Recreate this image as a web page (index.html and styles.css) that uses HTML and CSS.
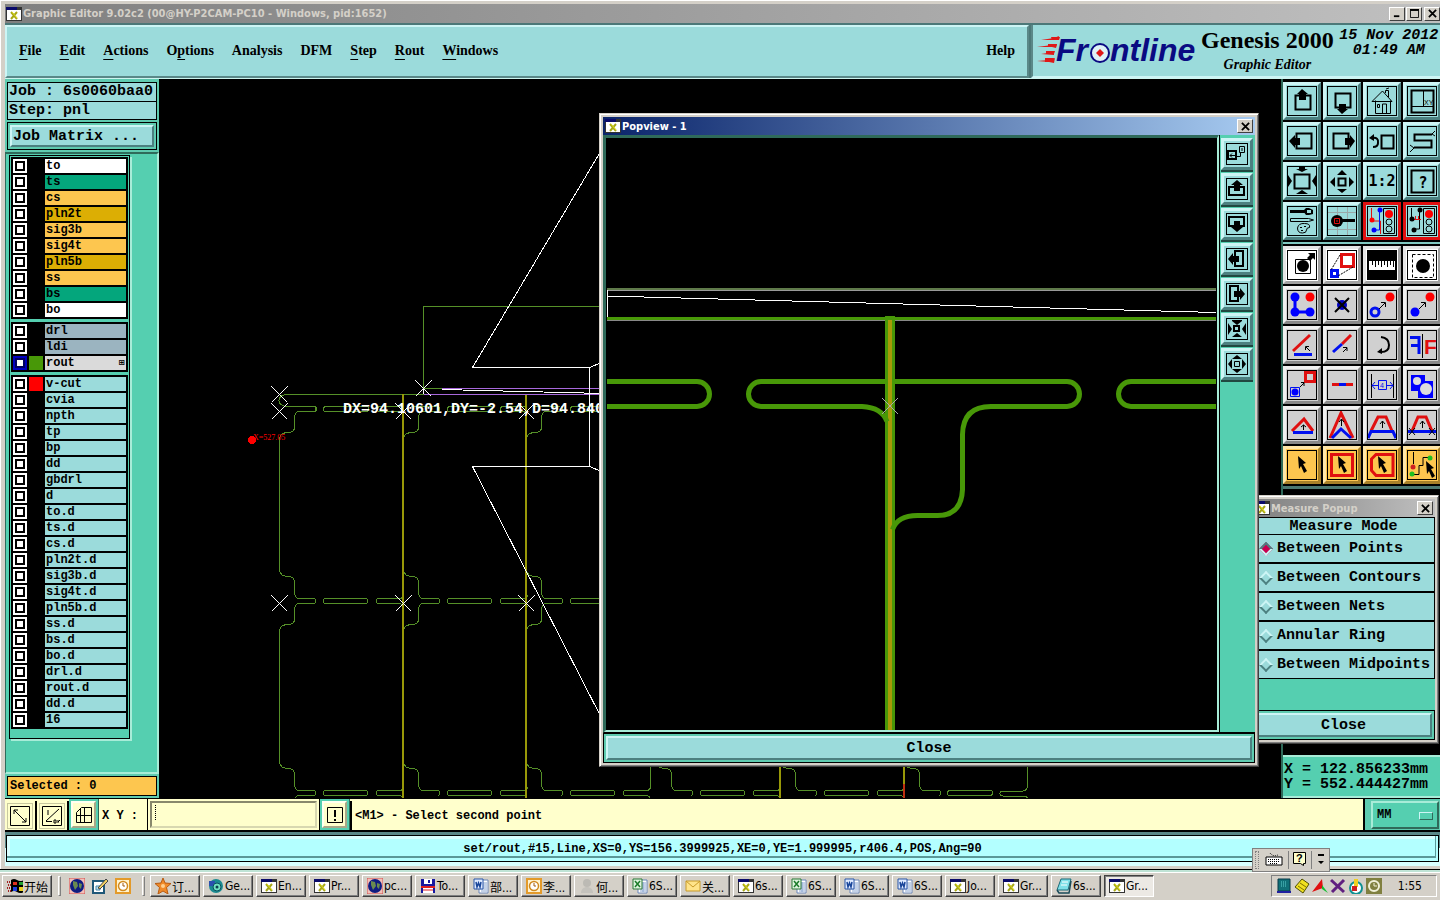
FILE: index.html
```
<!DOCTYPE html>
<html lang="en">
  <head>
    <meta charset="UTF-8" />
    <meta name="viewport" content="width=device-width, initial-scale=1.0" />
    <title>Graphic Editor</title>
    <link rel="stylesheet" href="styles.css" />
  </head>
  <body>
    <!-- shared shapes -->
    <svg class="defs" width="0" height="0">
      <symbol id="xwin" viewBox="0 0 16 16">
        <rect x="0" y="1" width="16" height="14" fill="#333" />
        <rect x="1" y="4" width="14" height="10" fill="#fff" />
        <rect x="0" y="1" width="11" height="3" fill="#0a0a6a" />
        <path d="M5 6l6 7M11 6l-6 7" stroke="#a8a818" stroke-width="2" />
        <path d="M6 6l5 6" stroke="#e4e020" />
      </symbol>
      <symbol id="closeX" viewBox="0 0 10 10">
        <path d="M1 1l8 8M9 1l-8 8" stroke="#000" stroke-width="2" />
      </symbol>
      <symbol id="cursor" viewBox="0 0 10 17">
        <path d="M0 0l8 7-3 1 4 7-3 2-3-7-2 3z" fill="#000" />
      </symbol>
      <symbol id="globe" viewBox="0 0 16 16">
        <rect width="16" height="16" fill="#f3c0b8" />
        <path d="M0 0h16v16H0z" fill="none" stroke="#d05050" />
        <circle cx="8" cy="8" r="7" fill="#101c80" />
        <path d="M4 3l4 1 1 4-3 4-2-5zM10 5l3 1-1 5-2-2z" fill="#6a8a50" />
      </symbol>
      <symbol id="clock" viewBox="0 0 16 16">
        <rect x="1" y="1" width="14" height="14" fill="#fff3cf" stroke="#e39a2a" stroke-width="2" />
        <circle cx="8" cy="8" r="4.500" fill="#fff" stroke="#d08a20" stroke-width="1.500" />
        <path d="M8 5v3h2" fill="none" stroke="#a05a10" />
      </symbol>
      <symbol id="star" viewBox="0 0 16 16">
        <path d="M8 0l2 5 6 .5-4.500 4L13 16l-5-3-5 3 1.500-6.500L0 5.500 6 5z" fill="#f08a28" stroke="#b85a10" />
        <circle cx="8" cy="8" r="2" fill="#ffd090" />
      </symbol>
      <symbol id="genesis" viewBox="0 0 16 16">
        <circle cx="8" cy="8" r="7" fill="#1a8a90" />
        <path d="M1 3h6v5H1z" fill="#2a50b0" />
        <circle cx="9" cy="9" r="4" fill="#70e0c0" stroke="#0a5060" />
        <circle cx="9" cy="9" r="1.500" fill="#0a4050" />
      </symbol>
      <symbol id="disk" viewBox="0 0 16 16">
        <path d="M1 1h14v14H1z" fill="#1818a0" />
        <path d="M4 1h8v5H4z" fill="#fff" />
        <path d="M8 2h2v3H8z" fill="#1818a0" />
        <path d="M1 8h14v2H1z" fill="#e02020" />
        <path d="M3 10h10v5H3z" fill="#fff" />
        <path d="M3 12h10" stroke="#e02020" />
      </symbol>
      <symbol id="word" viewBox="0 0 16 16">
        <path d="M6 2h9v13H6z" fill="#fff" stroke="#6a86b8" />
        <path d="M8 5h6M8 7h6M8 9h6M8 11h6M8 13h6" stroke="#88a4d0" />
        <path d="M1 1h9v10H1z" fill="#dfeaff" stroke="#2a56a8" />
        <path d="M3 4l1 5 1.500-4L7 9l1-5" fill="none" stroke="#1a469a" stroke-width="1.500" />
      </symbol>
      <symbol id="excel" viewBox="0 0 16 16">
        <path d="M6 2h9v13H6z" fill="#fff" stroke="#6a86b8" />
        <path d="M8 5h6M8 7h6M8 9h6M8 11h6M8 13h6M11 4v10" stroke="#88a4d0" />
        <path d="M1 1h9v10H1z" fill="#dff4df" stroke="#2a7a38" />
        <path d="M3 3l5 6M8 3L3 9" stroke="#1a7a28" stroke-width="1.500" />
      </symbol>
      <symbol id="mail" viewBox="0 0 16 16">
        <path d="M1 3h14v10H1z" fill="#ffe48a" stroke="#c89a28" />
        <path d="M1 3l7 6 7-6" fill="none" stroke="#c89a28" />
      </symbol>
      <symbol id="person" viewBox="0 0 16 16">
        <circle cx="8" cy="5" r="4" fill="#bcbab4" />
        <path d="M2 15c0-8 12-8 12 0z" fill="#c4c2bc" />
      </symbol>
      <symbol id="note" viewBox="0 0 16 16">
        <path d="M5 1h10l-3 11H1z" fill="#7fe0e8" stroke="#1a6a78" />
        <path d="M1 12l2 3h10l2-12" fill="none" stroke="#1a4a58" stroke-width="1.500" />
        <path d="M6 4h6M5 7h6" stroke="#fff" />
      </symbol>
      <symbol id="pencil" viewBox="0 0 16 16">
        <path d="M1 3h11v12H1z" fill="#fff" stroke="#205878" stroke-width="2" />
        <path d="M4 8h4v4H4z" fill="#bfe0f0" stroke="#48a" />
        <path d="M6 10l8-9 2 2-8 8z" fill="#f0d060" stroke="#444" />
      </symbol>
      <!-- rout tabs and the slots that follow them to the right -->
      <g id="tabUp"><path d="M0-31q1 6 9 6 6 0 6 6v9q0 7 5 7h14a2.500 2.500 0 0 1 0 5" /></g>
      <g id="tabDown"><path d="M0 29q1-6 9-6 6 0 6-6V9q0-7 5-7h14a2.500 2.500 0 0 0 0-5" /></g>
      <g id="slots">
        <path d="M46-3h40a2.500 2.500 0 0 1 0 5H46a2.500 2.500 0 0 1 0-5" />
        <path d="M124-6q-1 3-4 3H99a2.500 2.500 0 0 0 0 5h21q3 0 4 4" />
      </g>
      <path id="mark" d="M-8-8L8 8M8-8L-8 8" />
    </svg>

    <div class="editor">
      <header class="titlebar">
        <svg class="win-icon"><use href="#xwin" /></svg>
        <h1>Graphic Editor 9.02c2 (00@HY-P2CAM-PC10 - Windows, pid:1652)</h1>
        <div class="win-buttons">
          <button aria-label="Minimize"><svg viewBox="0 0 10 10"><path d="M1 8h6" stroke="#000" stroke-width="2" /></svg></button>
          <button aria-label="Maximize"><svg viewBox="0 0 10 10"><path d="M.5 1.500h9v8h-9z" fill="none" stroke="#000" /><path d="M0 1h10" stroke="#000" stroke-width="2" /></svg></button>
          <button aria-label="Close" class="apart"><svg><use href="#closeX" /></svg></button>
        </div>
      </header>

      <div class="top">
        <nav class="menu">
          <button><u>F</u>ile</button>
          <button><u>E</u>dit</button>
          <button><u>A</u>ctions</button>
          <button>O<u>p</u>tions</button>
          <button>Analysis</button>
          <button>DFM</button>
          <button><u>S</u>tep</button>
          <button><u>R</u>out</button>
          <button><u>W</u>indows</button>
          <button class="help">Help</button>
        </nav>
        <div class="brand">
          <svg class="logo" width="164" height="50">
            <g fill="#e01818" transform="translate(0 10)">
              <path d="M4 5l13-2 5-2-1 4zM0 12l15-2 5-1-1 4-4-1zM4 19l13-2 0 3zM0 26l12-1 6-2-1 5-5-1z" />
              <path d="M14 2h9l-1 3h-7zM11 9h9l-1 3h-8zM9 16h9l-1 3H9zM8 23h9l-1 4H8z" />
            </g>
            <text x="19" y="36">Fr</text>
            <circle cx="63" cy="28" r="9" fill="#dff2f6" stroke="#0a0a82" stroke-width="2" />
            <path d="M63 24l4 4-4 4-4-4z" fill="#e01818" />
            <text x="73" y="36">ntline</text>
          </svg>
          <div class="product">
            <strong>Genesis 2000</strong>
            <em>Graphic Editor</em>
          </div>
          <div class="date">15 Nov 2012<br />01:49 AM</div>
        </div>
      </div>

      <main class="workspace">
        <aside class="side">
          <div class="job">
            <div>Job : 6s0060baa0</div>
            <div>Step: pnl</div>
          </div>
          <div class="matrix"><button>Job Matrix ...</button></div>
          <div class="layer-area">
            <div class="layers" id="layers"></div>
          </div>
          <div class="selected">Selected : 0</div>
        </aside>

        <svg class="canvas" shape-rendering="crispEdges">
          <g transform="translate(-159 -79)" fill="none">
            <g stroke="#559028">
              <path d="M423.500 388V306.500H610M424 388.500h18" />
              <path d="M610 394.500H286q-7 1-7 6t7 6h28a2.500 2.500 0 0 1 0 5" />
              <path d="M326 406.500h40a2.500 2.500 0 0 1 0 5h-40a2.500 2.500 0 0 1 0-5M403 406.500h-23a2.500 2.500 0 0 0 0 5h20q3 0 3 4" />
              <path d="M411 406.500h26M450 406.500h40a2.500 2.500 0 0 1 0 5h-40a2.500 2.500 0 0 1 0-5M526 406.500h-23a2.500 2.500 0 0 0 0 5h20q3 0 3 4" />
              <path d="M534 406.500h26M573 411.500h40M573 406.500h40M573 406.500a2.500 2.500 0 0 0 0 5" />
              <use href="#tabDown" x="279.500" y="409.500" />
              <use href="#tabDown" x="403.500" y="409.500" />
              <use href="#tabDown" x="526.500" y="409.500" />
              <path d="M279.500 438v133M279.500 630v134" />
              <use href="#tabUp" x="279.500" y="601.500" />
              <use href="#tabDown" x="279.500" y="601.500" />
              <use href="#slots" x="279.500" y="601.500" />
              <use href="#tabUp" x="403.500" y="601.500" />
              <use href="#tabDown" x="403.500" y="601.500" />
              <use href="#slots" x="403.500" y="601.500" />
              <use href="#tabUp" x="526.500" y="601.500" />
              <use href="#tabDown" x="526.500" y="601.500" />
              <use href="#slots" x="526.500" y="601.500" />
              <use href="#tabUp" x="279.500" y="793.500" />
              <use href="#tabDown" x="279.500" y="793.500" />
              <use href="#slots" x="279.500" y="793.500" />
              <use href="#tabUp" x="403.500" y="793.500" />
              <use href="#slots" x="403.500" y="793.500" />
              <use href="#tabUp" x="526.500" y="793.500" />
              <use href="#slots" x="526.500" y="793.500" />
              <use href="#tabUp" x="656.500" y="793.500" />
              <use href="#slots" x="656.500" y="793.500" />
              <use href="#tabUp" x="780.500" y="793.500" />
              <use href="#slots" x="780.500" y="793.500" />
              <use href="#tabUp" x="904.500" y="793.500" />
              <path d="M950 790.500h40a2.500 2.500 0 0 1 0 5h-40a2.500 2.500 0 0 1 0-5" />
              <path d="M1027.500 760v25q0 6-5 6h-20a2.500 2.500 0 0 0 0 5h20q4 0 5 2M650.500 760v25q0 6-5 6" />
            </g>
            <path d="M403 394v404M526 394v404M780 760v38M904 760v30" stroke="#989808" stroke-width="2" />
            <path d="M904 784v14" stroke="#c03010" stroke-width="2" />
            <path d="M442 388.500h160M424 394.500h180" stroke="#a868dc" />
            <path d="M442 389.500L604 393.500M423.500 388v6" stroke="#fff" />
            <path d="M602 149L472.500 367.500h117v99h-117L602 719M589.500 367.500l12-5M589.500 466.500l12 5" stroke="#fff" />
            <g stroke="#fff">
              <use href="#mark" x="423.500" y="388.500" />
              <use href="#mark" x="279.500" y="394.500" />
              <use href="#mark" x="279.500" y="411.500" />
              <use href="#mark" x="403.500" y="411.500" />
              <use href="#mark" x="526.500" y="411.500" />
              <use href="#mark" x="279.500" y="603.500" />
              <use href="#mark" x="403.500" y="603.500" />
              <use href="#mark" x="526.500" y="603.500" />
            </g>
            <circle cx="252" cy="440" r="4" fill="#f00" />
            <text x="253" y="440" class="origin-text">X=527.05</text>
            <text x="343" y="413" class="measure-text">DX=94.10601,DY=-2.54,D=94.8400</text>
          </g>
        </svg>

        <aside class="tools">
          <div class="tool-grid view">
            <button aria-label="Pan up"><svg><path d="M8.500 9.500h15v14h-15z" /><path class="f" d="M15 3l6 5h-2v6h-7V8h-2z" /></svg></button>
            <button aria-label="Pan down"><svg><path d="M8.500 7.500h15v14h-15z" /><path class="f" d="M15 28l6-5h-2v-5h-7v5h-2z" /></svg></button>
            <button aria-label="Home"><svg class="thin"><path d="M8.500 14.500v13h15v-13M5 15.500L15.500 5l9.500 10.500zM18.500 7V4.500h3V11M19 3l3-1M15.500 27v-9h4v9M10.500 18.500h2v3h-2z" /></svg></button>
            <button aria-label="Pan to XY"><svg><path d="M4.500 4.500h22v22h-22z" /><path class="t" d="M16.500 4v16M4 20.500h22" /><text x="17" y="19" class="tiny">XY</text></svg></button>
            <button aria-label="Pan left"><svg><path d="M9.500 7.500h15v15h-15z" /><path class="f" d="M2 15l6-6v3h5v7H8v3z" /></svg></button>
            <button aria-label="Pan right"><svg><path d="M6.500 7.500h15v15h-15z" /><path class="f" d="M28 15l-5-6v3h-5v7h5v3z" /></svg></button>
            <button aria-label="Previous view"><svg><path d="M14.500 9.500h12v13h-12zM5 12q7-1 6 5 0 4-5 4" /><path class="f" d="M2 12l5-4v7z" /></svg></button>
            <button aria-label="Serpentine"><svg><path d="M25 8.500H7.500v6h17v7H7" /><path class="t" d="M25 8l3-3M25 8l3 2M7 22l-4-3M7 22l-4 4" /></svg></button>
            <button aria-label="Zoom in"><svg><path d="M7.500 8.500h15v14h-15z" /><path class="f" d="M15 6l-6-3h3V1h6v2h3zM15 24l-6 4h12zM5 15l-4-6v12zM25 15l4-6v12z" /></svg></button>
            <button aria-label="Zoom out"><svg><path d="M11.500 12.500h7v7h-7z" /><path class="f" d="M15 4l5 5H10zM15 27l5-4H10zM3 16l5-5v10zM27 16l-5-5v10z" /></svg></button>
            <button aria-label="Zoom ratio"><svg><text x="15" y="20" class="ratio">1:2</text></svg></button>
            <button aria-label="Help"><svg><path d="M4.500 4.500h22v22h-22z" /><text x="16" y="22" class="ratio">?</text></svg></button>
            <button aria-label="Settings"><svg class="thin"><path class="f" d="M3 4h14v3H3zM16 5l3-3h3v2h-2v3h2v2h-3zM22 2l4 2v4l-4 1V7h2V4h-2z" /><path d="M3.500 12.500h18l5 1.500-5 1.500h-18z" /><path d="M10.500 22q1-5 7-4.500 6 0 5 4-3 0-3 2.500 0 3-4 3-5 0-5-5z" /><path d="M13 21.500h2M17 20.500h2M14 24.500h2" /></svg></button>
            <button aria-label="Snap"><svg class="thin"><path d="M10.500 0v30M20.500 0v30M0 6.500h30M0 23.500h30" style="stroke: #98a8a8" /><circle class="f" cx="10" cy="15" r="6" /><path class="f" d="M15 13h13v3H15z" /><path class="red" d="M7.500 12.500h5v5h-5zM10 14v2" /></svg></button>
            <button class="alert" aria-label="Net check"><svg class="thin"><path class="red" d="M4.500 2v13h9v13" /><path class="blue" d="M12.500 5v19H7" /><circle cx="13" cy="4" r="2.500" fill="#00f" /><circle cx="5" cy="14" r="2.500" fill="#f00" /><circle cx="7" cy="24" r="2.500" fill="#00f" /><path d="M16.500 2.500h11v25h-11z" /><circle cx="22" cy="8" r="4" fill="#f00" /><circle cx="22" cy="16" r="3" /><circle cx="22" cy="23" r="3" /></svg></button>
            <button class="alert" aria-label="Line check"><svg class="thin"><path d="M4.500 2v12M12.500 5v18H7" /><path class="red" d="M6 13.500h8M8.500 10v4M11.500 10v4" /><circle class="f" cx="13" cy="4" r="2.500" /><circle class="f" cx="5" cy="13" r="2.500" /><circle class="f" cx="7" cy="24" r="2.500" /><path d="M16.500 2.500h11v25h-11z" /><circle cx="22" cy="8" r="4" fill="#f00" /><circle cx="22" cy="16" r="3" /><circle cx="22" cy="23" r="3" /></svg></button>
          </div>
          <div class="tool-grid edit">
            <button class="white" aria-label="Feature"><svg class="thin"><path d="M8.500 9.500h15v14h-15z" /><circle class="f" cx="16" cy="16" r="6" /><path class="f" d="M20 8l3-3-2-2h7v7l-2-2-3 3z" /></svg></button>
            <button class="white" aria-label="Resize"><svg><path class="red" d="M14.500 4.500h12v12h-12z" /><path class="blue" d="M4.500 20.500h6v6h-6z" /><path class="t" d="M13 5L4 20M26 17L11 26" stroke-dasharray="2 1" /></svg></button>
            <button class="white" aria-label="Measure"><svg class="thin"><path class="f" d="M1 1h28v28H1z" /><path d="M2 11h26v9H2z" fill="#fff" style="stroke: none" /><path d="M5.500 11v4M8.500 11v6M11.500 11v4M14.500 11v6M17.500 11v4M20.500 11v6M23.500 11v4M26.500 11v6" /></svg></button>
            <button class="white" aria-label="Select area"><svg class="thin"><path d="M5.500 4.500h21v23h-21z" stroke-dasharray="3 2" /><circle class="f" cx="16" cy="16" r="7" /></svg></button>
            <button aria-label="Chain"><svg><path d="M8 7v15h15" style="stroke: #00f; stroke-width: 3" /><circle cx="8" cy="7" r="4.500" fill="#00f" /><circle cx="8" cy="22" r="4.500" fill="#00f" /><circle cx="23" cy="22" r="4.500" fill="#00f" /><circle cx="23" cy="7" r="4.500" fill="#f00" /></svg></button>
            <button aria-label="Delete"><svg><circle cx="15" cy="15" r="5" fill="#0000c0" /><path d="M8 8l14 14M22 8L8 22" /></svg></button>
            <button aria-label="Move"><svg><circle class="blue" cx="8" cy="22" r="4" /><circle cx="23" cy="7" r="4.500" fill="#f00" /><path class="t" d="M12 19l6-6M14 12.500h4.500V17" /></svg></button>
            <button aria-label="Copy"><svg><circle cx="8" cy="22" r="4.500" fill="#00f" /><circle cx="23" cy="7" r="4.500" fill="#f00" /><path class="t" d="M12 19l6-6M14 12.500h4.500V17" /></svg></button>
            <button aria-label="Rotate line"><svg><path class="red" d="M6 21L23 5" /><path class="blue" d="M7 24.500h18" /><path class="t" d="M23 21l-4-4M18.500 20v-3.500H22" /></svg></button>
            <button aria-label="Extend line"><svg><path class="red" d="M15 14l9-9" /><path class="blue" d="M6 22l9-8" /><path class="t" d="M16 22l4-4M16 17.500h4V21" /></svg></button>
            <button aria-label="Rotate"><svg><path d="M14 7q8 1 8 8t-8 7" /><path class="f" d="M10 22l5-4v6z" /></svg></button>
            <button aria-label="Mirror"><svg><path class="blue" d="M3 7.500h9V24M4 15.500h8" /><path class="t" d="M15.500 4v24" /><text x="17" y="24" class="flip">F</text></svg></button>
            <button aria-label="Scale"><svg><path class="blue t" d="M3.500 17.500h9v9h-9z" /><circle cx="8" cy="22" r="3.500" fill="#00f" /><path class="red" d="M18.500 2.500h9v9h-9z" /><path class="red t" d="M19 5l2-2M27 9l-2 2" /><path class="t" d="M13 17l4-4M14 12.500h3V16" /></svg></button>
            <button aria-label="Break line"><svg><path class="red" d="M5 14.500h21" /><path class="blue" d="M12 14.500h7" /></svg></button>
            <button aria-label="Spacing"><svg class="thin"><path d="M4.500 4v24M26.500 4v24" /><path class="blue" d="M11.500 10.500h8v9h-8zM5 15.500h6M8 12l-3 3.500L8 19M20 15.500h6M23 12l3 3.500-3 3.500" /><text x="13" y="18" class="tiny bluetext">4</text></svg></button>
            <button aria-label="Merge"><svg><path d="M4 5h14v6h8v17H11v-7H4z" fill="#00f" style="stroke: none" /><circle cx="10" cy="11" r="4" fill="#ddd" style="stroke: none" /><circle cx="19" cy="19" r="6" fill="#ddd" style="stroke: none" /></svg></button>
            <button aria-label="Triangle"><svg><path class="red" d="M5 21L17 9l9 12" /><path class="blue" d="M6 22.500h20" /><path class="t" d="M16.500 20v-5M14 17l2.500-2 2.500 2" /></svg></button>
            <button aria-label="Corner"><svg><path class="red" d="M3 28L14 3l12 25" /><path class="blue" d="M5 28l9-9 10 9" /><path class="t" d="M14.500 16V9M12 12l2.500-3 2.500 3" /></svg></button>
            <button aria-label="Chamfer"><svg><path class="red" d="M4 21l7-14h8l6 14" /><path class="blue" d="M1 28l3-6.500h22l3 6.500" /><path class="t" d="M15.500 18v-7M13 14l2.500-3 2.500 3" /></svg></button>
            <button aria-label="Flat"><svg><path class="red" d="M5 21l6-14h8l6 14" /><path class="blue" d="M1 21.500h28" /><path class="t" d="M15.500 18v-7M13 14l2.500-3 2.500 3M2 18l6 7M8 18l-6 7M22 18l6 7M28 18l-6 7" /></svg></button>
            <button class="orange" aria-label="Select"><svg><use href="#cursor" x="11" y="6" width="10" height="17" /></svg></button>
            <button class="orange" aria-label="Select frame"><svg><path class="red" d="M4.500 4.500h21v21h-21z" /><use href="#cursor" x="11" y="6" width="10" height="17" /></svg></button>
            <button class="orange" aria-label="Select polygon"><svg><path class="red" d="M9 4.500h17v21H9l-4.500-5V9z" /><use href="#cursor" x="11" y="6" width="10" height="17" /></svg></button>
            <button class="orange" aria-label="Select net"><svg class="thin"><path d="M6.500 2v12M6 24.500h6v-9h4v-8h6" /><circle cx="6" cy="17" r="2.500" fill="#d02020" /><circle cx="23" cy="8" r="2.500" fill="#20c020" /><circle cx="5" cy="24" r="2.500" fill="#20c020" /><use href="#cursor" x="19" y="11" width="10" height="17" /></svg></button>
          </div>
          <div class="coords">X = 122.856233mm<br />Y = 552.444427mm</div>
        </aside>

        <section class="window measure">
          <header class="titlebar">
            <svg class="win-icon"><use href="#xwin" /></svg>
            <h2>Measure Popup</h2>
            <div class="win-buttons"><button aria-label="Close"><svg><use href="#closeX" /></svg></button></div>
          </header>
          <div class="measure-body">
            <h3>Measure Mode</h3>
            <label><input type="radio" name="mode" checked />Between Points</label>
            <label><input type="radio" name="mode" />Between Contours</label>
            <label><input type="radio" name="mode" />Between Nets</label>
            <label><input type="radio" name="mode" />Annular Ring</label>
            <label><input type="radio" name="mode" />Between Midpoints</label>
            <div class="close-row"><button>Close</button></div>
          </div>
        </section>

        <section class="window popview">
          <header class="titlebar">
            <svg class="win-icon"><use href="#xwin" /></svg>
            <h2>Popview - 1</h2>
            <div class="win-buttons"><button aria-label="Close"><svg><use href="#closeX" /></svg></button></div>
          </header>
          <div class="pop-body">
            <svg class="pop-canvas">
              <g transform="translate(-606 -138)" fill="none">
                <path d="M607 289h609" stroke="#5f7a4a" stroke-width="2" />
                <path d="M607 290.500h609" stroke="#999" />
                <path d="M607.500 290v28M607 296L1216 312.500" stroke="#fff" shape-rendering="crispEdges" />
                <path d="M607 318.500h609" stroke="#489808" stroke-width="3" />
                <path d="M607 320.500h609" stroke="#888" />
                <path d="M890 316v420" stroke="#489808" stroke-width="10" />
                <path d="M890 320v416" stroke="#a89a08" stroke-width="4" />
                <g stroke="#489808" stroke-width="5">
                  <path d="M607 381.500h90a12.500 12.500 0 0 1 0 25h-90" />
                  <path d="M886 381.500H761a12.500 12.500 0 0 0 0 25h101q20 1 25 15" />
                  <path d="M894 381.500h173a12.500 12.500 0 0 1 0 25h-76q-28 0-28.500 28v55q-1 26-25 26h-20q-20 0-25 14" />
                  <path d="M1216 381.500h-85a12.500 12.500 0 0 0 0 25h85" />
                </g>
                <use href="#mark" x="890" y="406" stroke="#aaa" />
              </g>
            </svg>
            <div class="pop-tools">
              <button aria-label="Link view"><svg><path class="b" d="M2 8h8v8H2z" /><path d="M13.500 3.500h5v6h-5zM10 13.500h4.500v-4M16 5v3M4 12.500h5M6 10.500l-2 2 2 2" /></svg></button>
              <button aria-label="Pan up"><svg><path class="b" d="M3 9h15v8H3z" /><path class="f" d="M11 2l6 5h-3v6H8V7H5z" /></svg></button>
              <button aria-label="Pan down"><svg><path class="b" d="M3 4h15v9H3z" /><path class="f" d="M11 19l6-5h-3V8H8v6H5z" /></svg></button>
              <button aria-label="Pan left"><svg><path class="b" d="M9 3h8v15H9z" /><path class="f" d="M2 11l5-6v3h6v6H7v3z" /></svg></button>
              <button aria-label="Pan right"><svg><path class="b" d="M4 3h8v15H4z" /><path class="f" d="M19 11l-5-6v3H8v6h6v3z" /></svg></button>
              <button aria-label="Zoom in"><svg><path class="b" d="M8 8h5v5H8z" /><path class="f" d="M11 7L6 3V2h10v1zM11 15l-5 4h10zM6 11L2 5v12zM16 11l4-6v12z" /></svg></button>
              <button aria-label="Zoom out"><svg><path d="M8.500 8.500h5v5h-5z" /><path class="f" d="M11 2l5 4H6zM11 20l5-4H6zM2 11l4-5v10zM20 11l-4-5v10z" /></svg></button>
            </div>
          </div>
          <div class="close-row"><button>Close</button></div>
        </section>
      </main>

      <div class="command">
        <button class="flat" aria-label="Line mode"><svg><path d="M.5.5h19v19H.5zM4 4l12 12M4 8V4h4M16 12v4h-4" /></svg></button>
        <button class="flat" aria-label="Angle mode"><svg><path d="M.5.5h19v19H.5zM4 15L17 3M4 15.500h6M6 4v5M12 14h2v3h-2zM16 14v3M18 14l-2 2" /></svg></button>
        <div class="cell"><button aria-label="Grid"><svg><path d="M2.500 17.500v-10l5-5h10v15zM10.500 2v16M2 10.500h16M6.500 17V4" /></svg></button></div>
        <label for="xy">X Y :</label>
        <div class="field"><input type="text" id="xy" /></div>
        <div class="cell"><button aria-label="Warning"><svg><path d="M2.500 2.500h15v15h-15z" /><path d="M10 5v7M10 14v2" stroke-width="2" /></svg></button></div>
        <div class="message">&lt;M1&gt; - Select second point</div>
        <div class="units"><select aria-label="Units"><option>MM</option></select></div>
      </div>
      <div class="status"><span>set/rout,#15,Line,XS=0,YS=156.3999925,XE=0,YE=1.999995,r406.4,POS,Ang=90</span></div>
    </div>

    <div class="ime">
      <span class="grip"></span>
      <button aria-label="Keyboard"><svg width="18" height="16"><path d="M1 6h16v8H1z" fill="#fff" stroke="#000" /><path d="M3 8.500h12M3 10.500h12M5 12.500h8" stroke="#000" stroke-dasharray="1 1" /><path d="M5 2q3 4 8 2" fill="none" stroke="#000" stroke-dasharray="1 1" /></svg></button>
      <button aria-label="Help"><svg width="14" height="16"><path d="M.5 1.500h12v11h-2v2l-3-2h-7z" fill="#ffffcc" stroke="#000" /><text x="3" y="11">?</text></svg></button>
      <button aria-label="Options"><svg width="8" height="16"><path d="M1 3h6v2H1zM1 10h6l-3 3z" /></svg></button>
    </div>

    <footer class="taskbar">
      <button class="start">
        <svg width="18" height="16"><path d="M0 4h4M1 7h3M0 10h4M1 13h3" stroke="#a02020" stroke-dasharray="1 1" stroke-width="2" /><path d="M4 2q3-2 6 0t7 0v12q-4 2-7 0t-6 0z" fill="#000" /><path d="M6 4h4v3H6z" fill="#e03020" /><path d="M12 4h4v3h-4z" fill="#20a030" /><path d="M6 9h4v4H6z" fill="#2040e0" /><path d="M12 9h4v4h-4z" fill="#e8d020" /></svg>
        开始
      </button>
      <span class="sep"></span>
      <div class="quick">
        <button aria-label="Browser"><svg><use href="#globe" /></svg></button>
        <button aria-label="Desktop"><svg><use href="#pencil" /></svg></button>
        <button aria-label="Calendar"><svg><use href="#clock" /></svg></button>
      </div>
      <span class="sep"></span>
      <div class="tasks" id="tasks"></div>
      <div class="tray">
        <svg><path d="M2 1h12v12H2z" fill="#107078" stroke="#083848" /><path d="M1 14h14" stroke="#2020a0" stroke-width="2" /><path d="M5 4h6M5 6h6M5 8h6" stroke="#60d0d0" stroke-dasharray="1 1" /></svg>
        <svg><path d="M1 9l7-8 7 5-6 9z" fill="#f0e020" stroke="#505000" /><path d="M4 8l6 4M6 5l6 4" stroke="#807000" /></svg>
        <svg><path d="M10 1l1 9-3 1-8 3z" fill="#e01010" /><path d="M10 7l6 8-6-4z" fill="#10c030" /></svg>
        <svg><path d="M1 2l13 12M14 2L2 14" stroke="#602080" stroke-width="3" /></svg>
        <svg><circle cx="8" cy="10" r="6" fill="#fff" stroke="#109090" stroke-width="2" /><path d="M6 1h4v8H6z" fill="#f0d020" /><path d="M4 8h5v5H4z" fill="#d02020" /></svg>
        <svg><path d="M0 0h16v16H0z" fill="#808040" /><circle cx="8" cy="8" r="5" fill="none" stroke="#f0f0d8" stroke-width="2" /><path d="M8 5v3h3" fill="none" stroke="#f0f0d8" /></svg>
        <time>1:55</time>
      </div>
    </footer>

    <script>
      const groups = [
        [
          ["to", "white"], ["ts", "mask"], ["cs", "signal"], ["pln2t", "plane"],
          ["sig3b", "signal"], ["sig4t", "signal"], ["pln5b", "plane"],
          ["ss", "signal"], ["bs", "mask"], ["bo", "white"],
        ],
        [["drl", "drill"], ["ldi", "drill"], ["rout", "rout"]],
        [
          "v-cut", "cvia", "npth", "tp", "bp", "dd", "gbdrl", "d", "to.d", "ts.d", "cs.d",
          "pln2t.d", "sig3b.d", "sig4t.d", "pln5b.d", "ss.d", "bs.d", "bo.d", "drl.d",
          "rout.d", "dd.d", "16",
        ].map((name) => [name, "misc"]),
      ];
      const swatches = { rout: "green", "v-cut": "red" };

      document.getElementById("layers").innerHTML = groups
        .map(
          (rows) =>
            `<div class="group">${rows
              .map(
                ([name, type]) => `
          <label class="layer ${type}">
            <input type="checkbox" />
            <span class="swatch ${swatches[name] || ""}"></span>
            <span class="name">${name}</span>
          </label>`
              )
              .join("")}</div>`
        )
        .join("");

      const tasks = [
        ["star", "订..."], ["genesis", "Ge..."], ["xwin", "En..."], ["xwin", "Pr..."],
        ["globe", "pc..."], ["disk", "To..."], ["word", "部..."], ["clock", "李..."],
        ["person", "何..."], ["excel", "6S..."], ["mail", "关..."], ["xwin", "6s..."],
        ["excel", "6S..."], ["word", "6S..."], ["word", "6S..."], ["xwin", "Jo..."],
        ["xwin", "Gr..."], ["note", "6s..."], ["xwin", "Gr..."],
      ];
      document.getElementById("tasks").innerHTML = tasks
        .map(
          ([icon, text], i) =>
            `<button class="${i === tasks.length - 1 ? "active" : ""}"><svg><use href="#${icon}" /></svg>${text}</button>`
        )
        .join("");
    </script>
  </body>
</html>
```
FILE: styles.css
```
* {
  box-sizing: border-box;
}
body {
  margin: 0;
  height: 100vh;
  min-height: 860px;
  display: flex;
  flex-direction: column;
  overflow: hidden;
  background: #d4d0c8;
  color: #000;
  font-family: "Liberation Mono", monospace;
}
button {
  margin: 0;
  padding: 0;
  border: none;
  background: none;
  color: inherit;
  font: inherit;
}
svg {
  display: block;
  flex: none;
}
.defs {
  position: absolute;
}

/* windows */
.editor {
  flex: 1;
  min-height: 0;
  display: flex;
  flex-direction: column;
  padding: 4px 0 3px 5px;
  background: #d4d0c8;
  box-shadow: inset 1px 1px #fff;
}
.titlebar {
  flex: none;
  display: flex;
  align-items: center;
  gap: 1px;
  height: 18px;
  padding-left: 2px;
  background: linear-gradient(90deg, #808080, #c0c0c0);
  color: #d4d0c8;
}
.editor > .titlebar {
  height: 19px;
  padding-left: 1px;
}
.titlebar h1,
.titlebar h2 {
  flex: 1;
  margin: 0;
  font: bold 11px "DejaVu Sans Condensed", "DejaVu Sans", sans-serif;
  white-space: nowrap;
}
.win-icon {
  width: 16px;
  height: 16px;
}
.win-buttons {
  display: flex;
  gap: 1px;
  padding-right: 2px;
}
.editor > .titlebar .win-buttons {
  padding: 0;
}
.win-buttons button {
  width: 16px;
  height: 14px;
  display: flex;
  align-items: center;
  justify-content: center;
  background: #d4d0c8;
  border: 1px solid;
  border-color: #fff #404040 #404040 #fff;
}
.win-buttons .apart {
  margin-left: 1px;
}
.win-buttons svg {
  width: 9px;
  height: 9px;
}

/* menu and brand */
.top {
  flex: none;
  display: flex;
  height: 56px;
  gap: 2px;
  background: #4c7878;
  padding-top: 2px;
  border-bottom: 1px solid #cdf5f0;
}
.menu {
  flex: 1;
  display: flex;
  align-items: center;
  gap: 18px;
  padding: 0 12px 2px;
  background: #9bdbdb;
  border: 2px solid;
  border-color: #cdf5f5 #5a8888 #5a8888 #cdf5f5;
  font: bold 14px "Liberation Serif", serif;
}
.menu u {
  text-underline-offset: 4px;
}
.help {
  margin-left: auto;
}
.brand {
  width: 409px;
  display: flex;
  padding-left: 4px;
  background: #9bdbdb;
  border-bottom: 2px solid #cdf5f5;
  border-left: 2px solid #5a8888;
}
.logo text {
  font: italic bold 32px "Liberation Sans", sans-serif;
  fill: #0a0a82;
}
.product {
  display: flex;
  flex-direction: column;
  align-items: center;
  font-family: "Liberation Serif", serif;
  white-space: nowrap;
}
.product strong {
  font-size: 24px;
  line-height: 30px;
}
.product em {
  font-size: 14px;
  font-weight: bold;
  line-height: 20px;
}
.date {
  flex: 1;
  padding: 3px 0 0 4px;
  font-size: 15px;
  font-style: italic;
  font-weight: bold;
  line-height: 15px;
  text-align: center;
  white-space: nowrap;
}

/* left panel */
.workspace {
  position: relative;
  flex: 1;
  min-height: 0;
  display: flex;
  background: #000;
}
.side {
  width: 154px;
  display: flex;
  flex-direction: column;
  background: #5fcbb0;
  font-size: 15px;
  font-weight: bold;
}
.job {
  margin: 3px 2px 2px;
  border: 1px solid #000;
  background: #9bdbdb;
  white-space: nowrap;
}
.job div {
  height: 18px;
  padding-left: 1px;
  line-height: 17px;
}
.job div + div {
  border-top: 1px solid #000;
}
.matrix {
  margin: 0 2px;
  padding: 2px;
  border: 1px solid #000;
}
.matrix button {
  display: block;
  width: 100%;
  height: 22px;
  padding-left: 1px;
  background: #9bdbdb;
  border: 2px solid;
  border-color: #cdf5f5 #4c8080 #4c8080 #cdf5f5;
  line-height: 17px;
  text-align: left;
}
.layer-area {
  flex: 1;
  min-height: 0;
  margin-top: 2px;
  padding: 1px 0 0 3px;
  background: #55cfb0;
  border: solid;
  border-width: 2px 2px 2px 1px;
  border-color: #2f6a5a #a8ecd8 #a8ecd8 #2f6a5a;
}
.layers {
  width: 121px;
  padding: 1px 1px 6px;
  border: 1px solid #000;
  box-shadow: 2px 2px #a8ecd8;
}
.group {
  display: flex;
  flex-direction: column;
  gap: 2px;
  width: 117px;
  margin-bottom: 3px;
  padding: 2px;
  background: #000;
}
.layer {
  display: flex;
  gap: 2px;
  height: 14px;
}
.layer input {
  flex: none;
  width: 14px;
  height: 14px;
  margin: 0;
  appearance: none;
  background: #fff;
  box-shadow: inset 0 0 0 2px #fff, inset 0 0 0 4px #000;
}
.swatch {
  width: 14px;
}
.swatch.green {
  background: #489808;
}
.swatch.red {
  background: #f00;
}
.name {
  flex: 1;
  padding-left: 1px;
  background: #9bdbdb;
  font-size: 12px;
  line-height: 14px;
}
.white .name {
  background: #fff;
}
.mask .name {
  background: #04a67c;
}
.signal .name {
  background: #fdc64f;
}
.plane .name {
  background: #dcae04;
}
.drill .name {
  background: #9bb4c0;
}
.rout .name {
  background: #dadada;
}
.rout input {
  box-shadow: inset 0 0 0 2px #0000c0, inset 0 0 0 4px #000060;
}
.rout .name::after {
  content: "⊞";
  float: right;
  margin-right: 1px;
  font: bold 8px/14px "DejaVu Sans", sans-serif;
}
.selected {
  height: 20px;
  margin: 2px;
  padding-left: 2px;
  border: 1px solid #000;
  background: #fdc64f;
  font-size: 12px;
  line-height: 19px;
}

/* drawing area */
.canvas {
  flex: 1;
  min-width: 0;
  height: 100%;
}
.measure-text {
  font: bold 15px "Liberation Mono", monospace;
  fill: #fff;
}
.origin-text {
  font: 8px "Liberation Serif", serif;
  fill: #f00;
}

/* right tool box */
.tools {
  width: 159px;
  display: flex;
  flex-direction: column;
  border-left: 2px solid #2f6a5a;
  overflow: hidden;
}
.tool-grid {
  display: grid;
  grid-template-columns: repeat(4, 38px);
  gap: 2px;
  padding-bottom: 2px;
}
.view {
  padding-top: 3px;
  border-bottom: 2px solid #80c8c0;
}
.edit {
  padding-top: 2px;
  border-bottom: 3px solid #4c7870;
}
.tool-grid button {
  width: 38px;
  height: 38px;
  padding: 1px;
  border: 3px solid;
  background: #9bdbdb;
  border-color: #cdf5f5 #4c8080 #4c8080 #cdf5f5;
}
.tool-grid.edit button {
  background: #d0d0d0;
  border-color: #f0f0f0 #888 #888 #f0f0f0;
}
.tool-grid.edit .white {
  background: #fff;
  border-color: #e4e4e4 #a0a0a0 #a0a0a0 #e4e4e4;
}
.tool-grid.edit .orange {
  background: #fdc64f;
  border-color: #ffe6a8 #a88028 #a88028 #ffe6a8;
}
.tool-grid .alert {
  border-color: #e01010;
}
.tool-grid svg {
  width: 30px;
  height: 30px;
  outline: 1px solid #000;
  outline-offset: -1px;
}
.tool-grid path,
.tool-grid circle {
  stroke: #000;
  stroke-width: 2;
}
.tool-grid path:not([fill]),
.tool-grid circle:not([fill]) {
  fill: none;
}
.tool-grid circle[fill] {
  stroke: none;
}
.tool-grid .thin path,
.tool-grid .thin circle,
.tool-grid .t {
  stroke-width: 1;
}
.tool-grid .f:not([fill]) {
  fill: #000;
  stroke: none;
}
.tool-grid .red {
  stroke: #e01010;
}
.tool-grid .blue {
  stroke: #0010f0;
}
.tool-grid .edit .red,
.tool-grid.edit svg:not(.thin) .blue:not(.t),
.tool-grid.edit svg:not(.thin) .red:not(.t) {
  stroke-width: 3;
}
.tiny {
  font: 7px "Liberation Sans", sans-serif;
}
.bluetext {
  fill: #0010f0;
}
.ratio {
  font: bold 15px "DejaVu Sans Mono", monospace;
  text-anchor: middle;
}
.flip {
  font: bold 21px "Liberation Sans", sans-serif;
  fill: #e01010;
}
.coords {
  margin-top: auto;
  height: 43px;
  padding: 5px 0 0 1px;
  border-top: 2px solid #a8ecd8;
  border-bottom: 2px solid #a8ecd8;
  background: #55cfb0;
  font-size: 15px;
  font-weight: bold;
  line-height: 15px;
  white-space: nowrap;
}

/* floating windows */
.window {
  position: absolute;
  display: flex;
  flex-direction: column;
  padding: 3px;
  background: #d4d0c8;
  border: 1px solid;
  border-color: #d4d0c8 #404040 #404040 #d4d0c8;
  box-shadow: inset 1px 1px #fff, inset -1px -1px #808080;
  font-size: 15px;
  font-weight: bold;
}
.close-row {
  padding: 2px;
  border: 1px solid #000;
  background: #5fcbb0;
}
.close-row button {
  display: block;
  width: 100%;
  height: 24px;
  background: #9bdbdb;
  border: 2px solid;
  border-color: #cdf5f5 #4c8080 #4c8080 #cdf5f5;
}
.popview {
  left: 594px;
  top: 34px;
  width: 660px;
  height: 654px;
}
.popview .titlebar {
  background: linear-gradient(90deg, #0a246a, #a6caf0);
  color: #fff;
}
.pop-body {
  flex: 1;
  min-height: 0;
  display: flex;
  background: #55cfb0;
  border-left: 1px solid #2f6a5a;
  border-bottom: 1px solid #000;
}
.pop-canvas {
  flex: 1;
  min-width: 0;
  height: 100%;
  background: #000;
  border: solid;
  border-width: 3px 2px 2px 2px;
  border-color: #2f6a5a #a8ecd8 #a8ecd8 #2f6a5a;
}
.pop-tools {
  width: 36px;
  padding: 3px 1px 0 1px;
  border-left: 1px solid #000;
}
.pop-tools button {
  display: block;
  width: 32px;
  height: 32px;
  margin-bottom: 3px;
  padding: 2px;
  background: #9bdbdb;
  border: 3px solid;
  border-color: #cdf5f5 #4c8080 #4c8080 #cdf5f5;
  box-shadow: 0 2px #204840;
}
.pop-tools svg {
  width: 22px;
  height: 22px;
  outline: 1px solid #000;
  outline-offset: -1px;
}
.pop-tools path {
  fill: none;
  stroke: #000;
}
.pop-tools .b {
  stroke-width: 2;
}
.pop-tools .f {
  fill: #000;
  stroke: none;
}
.measure {
  left: 1243px;
  top: 416px;
  width: 191px;
  height: 249px;
}
.measure-body {
  flex: 1;
  display: flex;
  flex-direction: column;
  background: #55cfb0;
}
.measure h3 {
  height: 17px;
  margin: 0;
  border: 1px solid #000;
  border-bottom: none;
  background: #9bdbdb;
  font-size: 15px;
  line-height: 17px;
  text-align: center;
}
.measure label {
  display: flex;
  align-items: center;
  gap: 6px;
  height: 29px;
  padding-left: 8px;
  background: #9bdbdb;
  border: 1px solid #000;
  white-space: nowrap;
}
.measure input {
  width: 10px;
  height: 10px;
  margin: 0;
  appearance: none;
  border: 2px solid;
  border-color: #cdf5f5 #4c8080 #4c8080 #cdf5f5;
  transform: rotate(45deg);
}
.measure input:checked {
  background: #c80050;
  border-color: #4c8080 #cdf5f5 #cdf5f5 #4c8080;
}
.measure .close-row {
  margin-top: auto;
}

/* command line */
.command {
  flex: none;
  display: flex;
  height: 34px;
  padding-top: 2px;
  border-bottom: 2px solid #000;
  background: #ffffcc;
  border-top: 1px solid #000;
  font-size: 12px;
  font-weight: bold;
}
.command svg {
  width: 20px;
  height: 20px;
  fill: none;
  stroke: #000;
}
.command .flat {
  width: 32px;
  padding: 0 5px;
  border-right: 2px solid #000;
}
.command .flat svg {
  box-shadow: 0 0 0 2px #ffffcc, 0 0 0 3px #c8c8a0;
}
.cell {
  width: 30px;
  margin-top: -2px;
  padding: 2px;
  background: #55cfb0;
  border-right: 1px solid #2f6a5a;
}
.cell button {
  width: 25px;
  height: 27px;
  padding: 1px;
  background: #ffffcc;
  border: 2px solid;
  border-color: #fffff0 #a8a888 #a8a888 #fffff0;
}
.command label {
  width: 48px;
  padding-left: 3px;
  line-height: 30px;
}
.field {
  position: relative;
  width: 173px;
  margin-top: -2px;
  padding: 2px;
  border: solid #000;
  border-width: 0 1px;
}
.field::after {
  content: "";
  position: absolute;
  left: 7px;
  top: 6px;
  height: 15px;
  border-left: 1px dotted #000;
}
.field input {
  width: 100%;
  height: 27px;
  padding: 0 6px;
  background: #ffffcc;
  border: 2px solid;
  border-color: #88886c #d8d8b0 #d8d8b0 #88886c;
  border-radius: 0;
  font: inherit;
}
.message {
  flex: 1;
  padding-left: 3px;
  border-left: 2px solid #000;
  line-height: 30px;
}
.units {
  position: relative;
  width: 77px;
  margin-top: -2px;
  padding: 2px 1px 2px 6px;
  border-left: 2px solid #000;
  background: #5fcbb0;
}
.units select {
  width: 100%;
  height: 28px;
  padding-left: 4px;
  appearance: none;
  background: #55cfb0;
  border: 2px solid;
  border-color: #a8ecd8 #2f6a5a #2f6a5a #a8ecd8;
  border-radius: 0;
  color: #000;
  font: inherit;
}
.units::after {
  content: "";
  position: absolute;
  right: 7px;
  top: 13px;
  width: 12px;
  height: 6px;
  border: 1px solid;
  border-color: #cdf5f5 #2f6a5a #2f6a5a #cdf5f5;
}
.status {
  flex: none;
  height: 34px;
  padding: 3px 1px 1px;
  background: linear-gradient(#5a8888 16px, #d8ffff 16px);
  font-size: 12px;
  font-weight: bold;
  line-height: 26px;
  text-align: center;
}
.status span {
  display: block;
  height: 27px;
  border: 1px solid #000;
  background: #b3ffff;
  box-shadow: inset -2px -3px #b3ffff, inset -3px -5px #5a9898, inset 3px 3px #d8ffff;
}

/* input method bar */
.ime {
  position: absolute;
  right: 110px;
  bottom: 28px;
  z-index: 2;
  display: flex;
  align-items: center;
  width: 78px;
  height: 24px;
  background: #d4d0c8;
  border: 1px solid #808080;
}
.ime .grip {
  width: 4px;
  height: 18px;
  margin: 0 2px;
  border: 1px dotted #808080;
}
.ime button {
  display: flex;
  justify-content: center;
  flex: 1 1 auto;
  height: 18px;
}
.ime button + button {
  border-left: 1px solid #808080;
}
.ime text {
  font: bold 11px "Liberation Sans", sans-serif;
}

/* taskbar */
.taskbar {
  flex: none;
  display: flex;
  align-items: center;
  height: 31px;
  padding: 2px 3px 0 2px;
  border-top: 1px solid #000;
  background: #d4d0c8;
  box-shadow: inset 0 2px #bfe3d5, inset 0 3px #fff;
  font: 12px "DejaVu Sans Condensed", "Noto Sans CJK SC", sans-serif;
}
.taskbar button {
  display: flex;
  align-items: center;
  white-space: nowrap;
}
.taskbar button svg {
  width: 16px;
  height: 16px;
}
.start,
.tasks button {
  width: 50px;
  height: 22px;
  gap: 1px;
  padding-left: 4px !important;
  border: 1px solid;
  border-color: #fff #404040 #404040 #fff;
  box-shadow: inset -1px -1px #808080;
}
.start {
  font-family: "Noto Sans CJK SC", sans-serif;
}
.tasks {
  flex: 1;
  display: flex;
  gap: 3px;
}
.tasks .active {
  background: #ece9e4;
  border-color: #404040 #fff #fff #404040;
  box-shadow: inset 1px 1px #808080;
}
.sep {
  width: 3px;
  height: 20px;
  margin: 0 5px 0 6px;
  border: 1px solid;
  border-color: #fff #808080 #808080 #fff;
}
.quick {
  display: flex;
  gap: 7px;
  margin: 0 5px 0 3px;
}
.tray {
  display: flex;
  align-items: center;
  gap: 2px;
  width: 166px;
  height: 22px;
  padding-left: 4px;
  border: 1px solid;
  border-color: #808080 #fff #fff #808080;
}
.tray svg {
  width: 16px;
  height: 16px;
}
.tray time {
  margin: 0 14px 0 auto;
}
```
